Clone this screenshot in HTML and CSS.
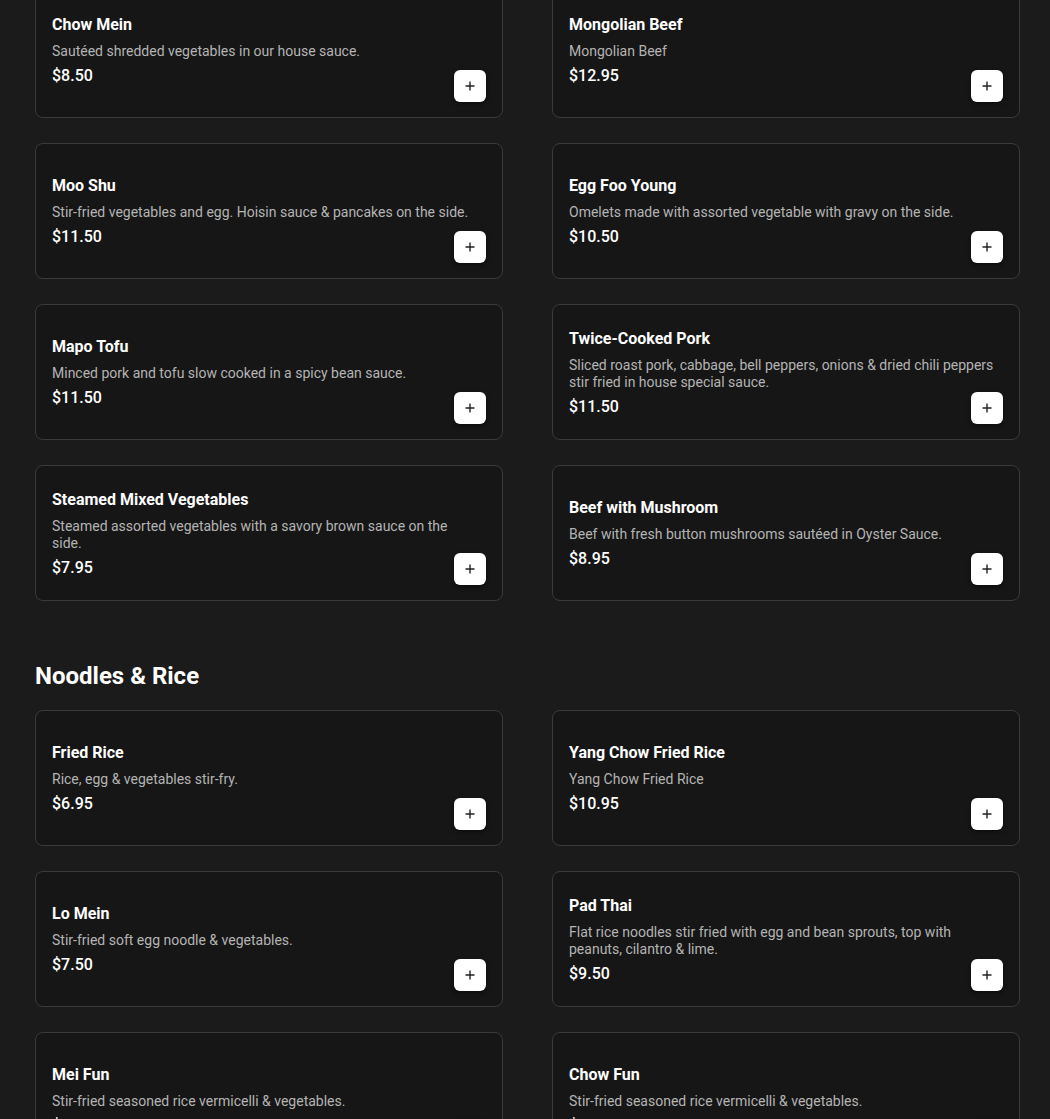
FILE: index.html
```html
<!DOCTYPE html>
<html>
<head>
<meta charset="utf-8">
<link rel="stylesheet" href="styles.css">
</head>
<body>
<main class="menu">
  <section class="section first">
    <div class="grid">
      <div class="card"><div class="info"><h3 class="name">Chow Mein</h3><p class="desc">Sautéed shredded vegetables in our house sauce.</p><div class="price">$8.50</div></div><button class="add"><svg viewBox="0 0 12 12" width="12" height="12"><path d="M6 1.5v9M1.5 6h9" stroke="#222" stroke-width="1.4" fill="none"/></svg></button></div>
      <div class="card"><div class="info"><h3 class="name">Mongolian Beef</h3><p class="desc">Mongolian Beef</p><div class="price">$12.95</div></div><button class="add"><svg viewBox="0 0 12 12" width="12" height="12"><path d="M6 1.5v9M1.5 6h9" stroke="#222" stroke-width="1.4" fill="none"/></svg></button></div>
      <div class="card"><div class="info"><h3 class="name">Moo Shu</h3><p class="desc">Stir-fried vegetables and egg. Hoisin sauce &amp; pancakes on the side.</p><div class="price">$11.50</div></div><button class="add"><svg viewBox="0 0 12 12" width="12" height="12"><path d="M6 1.5v9M1.5 6h9" stroke="#222" stroke-width="1.4" fill="none"/></svg></button></div>
      <div class="card"><div class="info"><h3 class="name">Egg Foo Young</h3><p class="desc">Omelets made with assorted vegetable with gravy on the side.</p><div class="price">$10.50</div></div><button class="add"><svg viewBox="0 0 12 12" width="12" height="12"><path d="M6 1.5v9M1.5 6h9" stroke="#222" stroke-width="1.4" fill="none"/></svg></button></div>
      <div class="card"><div class="info"><h3 class="name">Mapo Tofu</h3><p class="desc">Minced pork and tofu slow cooked in a spicy bean sauce.</p><div class="price">$11.50</div></div><button class="add"><svg viewBox="0 0 12 12" width="12" height="12"><path d="M6 1.5v9M1.5 6h9" stroke="#222" stroke-width="1.4" fill="none"/></svg></button></div>
      <div class="card"><div class="info"><h3 class="name">Twice-Cooked Pork</h3><p class="desc">Sliced roast pork, cabbage, bell peppers, onions &amp; dried chili peppers stir fried in house special sauce.</p><div class="price">$11.50</div></div><button class="add"><svg viewBox="0 0 12 12" width="12" height="12"><path d="M6 1.5v9M1.5 6h9" stroke="#222" stroke-width="1.4" fill="none"/></svg></button></div>
      <div class="card"><div class="info"><h3 class="name">Steamed Mixed Vegetables</h3><p class="desc">Steamed assorted vegetables with a savory brown sauce on the side.</p><div class="price">$7.95</div></div><button class="add"><svg viewBox="0 0 12 12" width="12" height="12"><path d="M6 1.5v9M1.5 6h9" stroke="#222" stroke-width="1.4" fill="none"/></svg></button></div>
      <div class="card"><div class="info"><h3 class="name">Beef with Mushroom</h3><p class="desc">Beef with fresh button mushrooms sautéed in Oyster Sauce.</p><div class="price">$8.95</div></div><button class="add"><svg viewBox="0 0 12 12" width="12" height="12"><path d="M6 1.5v9M1.5 6h9" stroke="#222" stroke-width="1.4" fill="none"/></svg></button></div>
    </div>
  </section>
  <section class="section">
    <h2 class="heading">Noodles &amp; Rice</h2>
    <div class="grid">
      <div class="card"><div class="info"><h3 class="name">Fried Rice</h3><p class="desc">Rice, egg &amp; vegetables stir-fry.</p><div class="price">$6.95</div></div><button class="add"><svg viewBox="0 0 12 12" width="12" height="12"><path d="M6 1.5v9M1.5 6h9" stroke="#222" stroke-width="1.4" fill="none"/></svg></button></div>
      <div class="card"><div class="info"><h3 class="name">Yang Chow Fried Rice</h3><p class="desc">Yang Chow Fried Rice</p><div class="price">$10.95</div></div><button class="add"><svg viewBox="0 0 12 12" width="12" height="12"><path d="M6 1.5v9M1.5 6h9" stroke="#222" stroke-width="1.4" fill="none"/></svg></button></div>
      <div class="card"><div class="info"><h3 class="name">Lo Mein</h3><p class="desc">Stir-fried soft egg noodle &amp; vegetables.</p><div class="price">$7.50</div></div><button class="add"><svg viewBox="0 0 12 12" width="12" height="12"><path d="M6 1.5v9M1.5 6h9" stroke="#222" stroke-width="1.4" fill="none"/></svg></button></div>
      <div class="card"><div class="info"><h3 class="name">Pad Thai</h3><p class="desc">Flat rice noodles stir fried with egg and bean sprouts, top with peanuts, cilantro &amp; lime.</p><div class="price">$9.50</div></div><button class="add"><svg viewBox="0 0 12 12" width="12" height="12"><path d="M6 1.5v9M1.5 6h9" stroke="#222" stroke-width="1.4" fill="none"/></svg></button></div>
      <div class="card"><div class="info"><h3 class="name">Mei Fun</h3><p class="desc">Stir-fried seasoned rice vermicelli &amp; vegetables.</p><div class="price">$8.50</div></div><button class="add"><svg viewBox="0 0 12 12" width="12" height="12"><path d="M6 1.5v9M1.5 6h9" stroke="#222" stroke-width="1.4" fill="none"/></svg></button></div>
      <div class="card"><div class="info"><h3 class="name">Chow Fun</h3><p class="desc">Stir-fried seasoned rice vermicelli &amp; vegetables.</p><div class="price">$8.50</div></div><button class="add"><svg viewBox="0 0 12 12" width="12" height="12"><path d="M6 1.5v9M1.5 6h9" stroke="#222" stroke-width="1.4" fill="none"/></svg></button></div>
    </div>
  </section>
</main>
</body>
</html>
```
FILE: styles.css
```css
html, body {
  margin: 0;
  padding: 0;
  background: #1b1b1b;
  color: #fff;
  font-family: Roboto, "Liberation Sans", Arial, sans-serif;
  height: 1119px;
  overflow: hidden;
}
.menu {
  width: 985px;
  padding-left: 35px;
}
.section.first {
  margin-top: -18px;
}
.section + .section {
  margin-top: 59px;
}
.heading {
  margin: 0 0 18px;
  font-size: 24px;
  line-height: 32px;
  font-weight: 700;
  color: #fff;
}
.grid {
  display: grid;
  grid-template-columns: 468px 468px;
  column-gap: 49px;
  row-gap: 25px;
}
.card {
  position: relative;
  box-sizing: border-box;
  height: 136px;
  background: #161616;
  border: 1px solid #3a3a3a;
  border-radius: 8px;
  padding: 0 16px;
  display: flex;
  align-items: center;
}
.info {
  padding-top: 1px;
  padding-right: 8px;
}
.name {
  margin: 0 0 6px;
  font-size: 16px;
  line-height: 24px;
  font-weight: 700;
  color: #fff;
}
.desc {
  margin: 0 0 4px;
  font-size: 14px;
  line-height: 17px;
  color: #b4b4b4;
}
.price {
  font-size: 16px;
  line-height: 24px;
  font-weight: 500;
  color: #fff;
}
.add {
  position: absolute;
  right: 16px;
  bottom: 15px;
  width: 32px;
  height: 32px;
  padding: 0;
  border: none;
  border-radius: 6px;
  background: #fff;
  box-shadow: 0 2px 4px rgba(0,0,0,0.5);
  display: flex;
  align-items: center;
  justify-content: center;
}
.add svg {
  display: block;
}
```
